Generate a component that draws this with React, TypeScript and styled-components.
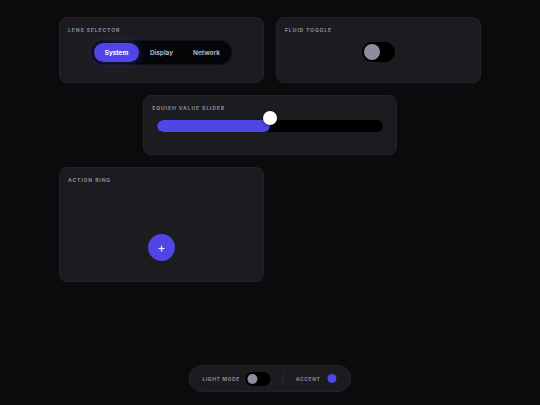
import { FC, useState } from 'react'
import styled, { createGlobalStyle, css } from 'styled-components'

const accent = '#5046e5'

const GlobalStyle = createGlobalStyle`
  html, body {
    margin: 0;
    padding: 0;
    background: #0b0b0d;
    font-family: Inter, "Liberation Sans", sans-serif;
  }
`

const Page = styled.div`
  min-height: 405px;
  padding-top: 17px;
  box-sizing: border-box;
`

const Grid = styled.div`
  display: grid;
  grid-template-columns: 205px 205px;
  column-gap: 12px;
  row-gap: 12px;
  justify-content: center;
  align-items: start;
`

const Card = styled.section<{ $span?: boolean; $h: number; $w?: number }>`
  box-sizing: border-box;
  height: ${(p) => p.$h}px;
  width: ${(p) => (p.$w ? `${p.$w}px` : 'auto')};
  background: #1c1c20;
  border: 1px solid #222227;
  border-radius: 8px;
  padding: 9px 8px;
  display: flex;
  flex-direction: column;
  ${(p) =>
    p.$span &&
    css`
      grid-column: 1 / -1;
      justify-self: center;
    `}
`

const Label = styled.h3`
  margin: 0;
  font-size: 5.1px;
  line-height: 6px;
  font-weight: 700;
  letter-spacing: 0.85px;
  color: #8a8a94;
  text-transform: uppercase;
`

const Center = styled.div<{ $top: number }>`
  display: flex;
  justify-content: center;
  margin-top: ${(p) => p.$top}px;
`

const Segmented = styled.div`
  display: flex;
  padding: 3px;
  background: #050507;
  border-radius: 999px;
  box-shadow: inset 0 0 0 1px #111116;
`

const Segment = styled.button<{ $active?: boolean }>`
  width: 45px;
  height: 19px;
  border: 0;
  border-radius: 999px;
  font-family: inherit;
  font-size: 6.4px;
  font-weight: 700;
  cursor: pointer;
  background: ${(p) => (p.$active ? accent : 'transparent')};
  color: ${(p) => (p.$active ? '#ffffff' : '#b4b4bc')};
  box-shadow: ${(p) => (p.$active ? `0 0 10px rgba(80, 70, 229, 0.45)` : 'none')};
`

const Toggle = styled.div<{ $w: number; $h: number }>`
  width: ${(p) => p.$w}px;
  height: ${(p) => p.$h}px;
  background: #000;
  border-radius: 999px;
  display: flex;
  align-items: center;
  padding: 0 2px;
  box-sizing: border-box;
`

const Knob = styled.div<{ $d: number }>`
  width: ${(p) => p.$d}px;
  height: ${(p) => p.$d}px;
  border-radius: 50%;
  background: #8e8c9e;
`

const SliderWrap = styled.div`
  position: relative;
  margin: 9px 5px 0;
  height: 12px;
`

const Track = styled.div`
  height: 12px;
  background: #000;
  border-radius: 999px;
  overflow: hidden;
`

const Fill = styled.div`
  height: 100%;
  background: ${accent};
  border-radius: 999px;
`

const Thumb = styled.div`
  position: absolute;
  top: -9px;
  width: 14px;
  height: 14px;
  margin-left: -7px;
  border-radius: 50%;
  background: #fff;
  box-shadow: 0 1px 3px rgba(0, 0, 0, 0.5);
`

const ActionArea = styled.div`
  flex: 1;
  display: flex;
  justify-content: center;
  align-items: flex-start;
  padding-top: 51px;
`

const PlusButton = styled.button`
  width: 27px;
  height: 27px;
  border-radius: 50%;
  border: 0;
  background: ${accent};
  color: #fff;
  font-family: inherit;
  font-size: 12px;
  line-height: 1;
  display: flex;
  align-items: center;
  justify-content: center;
  padding: 0;
`

const Dock = styled.div`
  position: fixed;
  left: 50%;
  bottom: 13px;
  transform: translateX(-50%);
  height: 27px;
  box-sizing: border-box;
  padding: 0 14px 0 13px;
  background: #1c1c20;
  border: 1px solid #222227;
  border-radius: 999px;
  display: flex;
  align-items: center;
  gap: 6px;
`

const DockLabel = styled.span`
  font-size: 5px;
  font-weight: 700;
  letter-spacing: 0.6px;
  color: #8a8a94;
`

const Divider = styled.div`
  width: 1px;
  height: 13px;
  background: #2a2a30;
  margin: 0 6px 0 6px;
`

const AccentDot = styled.div`
  width: 9px;
  height: 9px;
  border-radius: 50%;
  background: ${accent};
  margin-left: 1px;
`

const LensSelector: FC = () => {
  const [active, setActive] = useState('System')
  return (
    <Segmented>
      {['System', 'Display', 'Network'].map((s) => (
        <Segment key={s} $active={s === active} onClick={() => setActive(s)}>
          {s}
        </Segment>
      ))}
    </Segmented>
  )
}

export default function App() {
  const value = 50
  return (
    <Page>
      <GlobalStyle />
      <Grid>
        <Card $h={66}>
          <Label>Lens Selector</Label>
          <Center $top={7}>
            <LensSelector />
          </Center>
        </Card>
        <Card $h={66}>
          <Label>Fluid Toggle</Label>
          <Center $top={9}>
            <Toggle $w={33} $h={20}>
              <Knob $d={16} />
            </Toggle>
          </Center>
        </Card>
        <Card $span $h={60} $w={254}>
          <Label>Squish Value Slider</Label>
          <SliderWrap>
            <Track>
              <Fill style={{ width: `${value}%` }} />
            </Track>
            <Thumb style={{ left: `${value}%` }} />
          </SliderWrap>
        </Card>
        <Card $h={115}>
          <Label>Action Ring</Label>
          <ActionArea>
            <PlusButton>+</PlusButton>
          </ActionArea>
        </Card>
      </Grid>
      <Dock>
        <DockLabel>LIGHT MODE</DockLabel>
        <Toggle $w={25} $h={14}>
          <Knob $d={10} />
        </Toggle>
        <Divider />
        <DockLabel>ACCENT</DockLabel>
        <AccentDot />
      </Dock>
    </Page>
  )
}
